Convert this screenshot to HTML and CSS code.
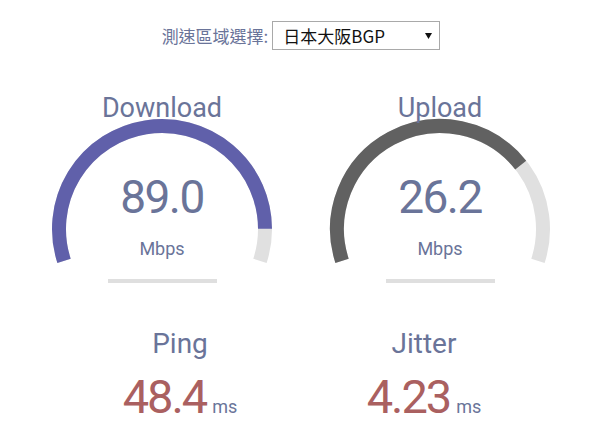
FILE: index.html
```html
<!DOCTYPE html>
<html lang="zh-Hant">
<head>
<meta charset="utf-8">
<title>Speedtest</title>
<link rel="stylesheet" href="styles.css">
</head>
<body>
<div class="page">
  <div class="server-row">
    <span class="server-label">測速區域選擇:</span>
    <div class="select">
      <span class="select-text">日本大阪BGP</span>
      <svg class="select-arrow" width="7" height="6" viewBox="0 0 7 6"><path d="M0 0 H7 L3.5 6 Z" fill="#111"/></svg>
    </div>
  </div>

  <div class="gauges">
    <div class="gauge">
      <svg class="meter" width="278" height="200" viewBox="0 0 278 200">
        <path d="M41.04 172.83 A103 103 0 1 1 236.96 172.83" fill="none" stroke="#E0E0E0" stroke-width="14"/>
        <path d="M41.04 172.83 A103 103 0 1 1 242.0 140.68" fill="none" stroke="#6060AA" stroke-width="14"/>
        <rect x="85" y="191" width="109" height="4" fill="#DFDFDF"/>
      </svg>
      <div class="gauge-text">
        <div class="gauge-title">Download</div>
        <div class="gauge-value">89.0</div>
        <div class="gauge-unit">Mbps</div>
      </div>
    </div>
    <div class="gauge">
      <svg class="meter" width="278" height="200" viewBox="0 0 278 200">
        <path d="M41.04 172.83 A103 103 0 1 1 236.96 172.83" fill="none" stroke="#E0E0E0" stroke-width="14"/>
        <path d="M41.04 172.83 A103 103 0 0 1 219.72 77.03" fill="none" stroke="#616161" stroke-width="14"/>
        <rect x="85" y="191" width="109" height="4" fill="#DFDFDF"/>
      </svg>
      <div class="gauge-text">
        <div class="gauge-title">Upload</div>
        <div class="gauge-value">26.2</div>
        <div class="gauge-unit">Mbps</div>
      </div>
    </div>
  </div>

  <div class="latency">
    <div class="lat-item">
      <div class="lat-title">Ping</div>
      <div class="lat-value">48.4<span class="lat-unit">ms</span></div>
    </div>
    <div class="lat-item">
      <div class="lat-title">Jitter</div>
      <div class="lat-value">4.23<span class="lat-unit">ms</span></div>
    </div>
  </div>
</div>
</body>
</html>
```

FILE: styles.css
```css
html, body {
  margin: 0;
  padding: 0;
  background: #ffffff;
}

body {
  font-family: Roboto, "Noto Sans", sans-serif;
  color: #6A7499;
}

.page {
  width: 598px;
  display: flex;
  flex-direction: column;
}

.server-row {
  display: flex;
  justify-content: center;
  align-items: center;
  gap: 4px;
  padding-top: 21px;
  padding-left: 4px;
  height: 29px;
}

.server-label {
  font-family: "Noto Sans CJK TC", sans-serif;
  font-size: 17px;
  color: #6A7499;
  line-height: 29px;
}

.select {
  box-sizing: border-box;
  width: 168px;
  height: 29px;
  border: 1px solid #A9A9A9;
  background: #fff;
  display: flex;
  align-items: center;
  justify-content: space-between;
  padding: 0 7px 0 10px;
}

.select-text {
  font-family: "Noto Sans CJK TC", sans-serif;
  font-size: 17px;
  color: #111;
  line-height: 27px;
}

.select-arrow {
  display: block;
}

.gauges {
  display: flex;
  justify-content: center;
  padding-left: 4px;
  margin-top: 38px;
}

.gauge {
  display: grid;
  width: 278px;
  height: 200px;
}

.gauge > * {
  grid-area: 1 / 1;
}

.meter {
  display: block;
}

.gauge-text {
  display: flex;
  flex-direction: column;
  align-items: center;
  padding-top: 5px;
}

.gauge-title {
  font-size: 27px;
  line-height: 30px;
}

.gauge-value {
  font-size: 46px;
  line-height: 50px;
  letter-spacing: -1.5px;
  margin-top: 49px;
}

.gauge-unit {
  font-size: 18px;
  line-height: 20px;
  margin-top: 17px;
}

.latency {
  display: flex;
  justify-content: center;
  padding-left: 6px;
  margin-top: 41px;
}

.lat-item {
  width: 244px;
  display: flex;
  flex-direction: column;
  align-items: center;
}

.lat-title {
  font-size: 28px;
  line-height: 30px;
}

.lat-value {
  font-size: 47px;
  line-height: 50px;
  letter-spacing: -2px;
  margin-top: 13px;
  color: #AA6060;
}

.lat-unit {
  font-size: 18px;
  line-height: 20px;
  letter-spacing: 0;
  margin-left: 6px;
  color: #6A7499;
}
```
